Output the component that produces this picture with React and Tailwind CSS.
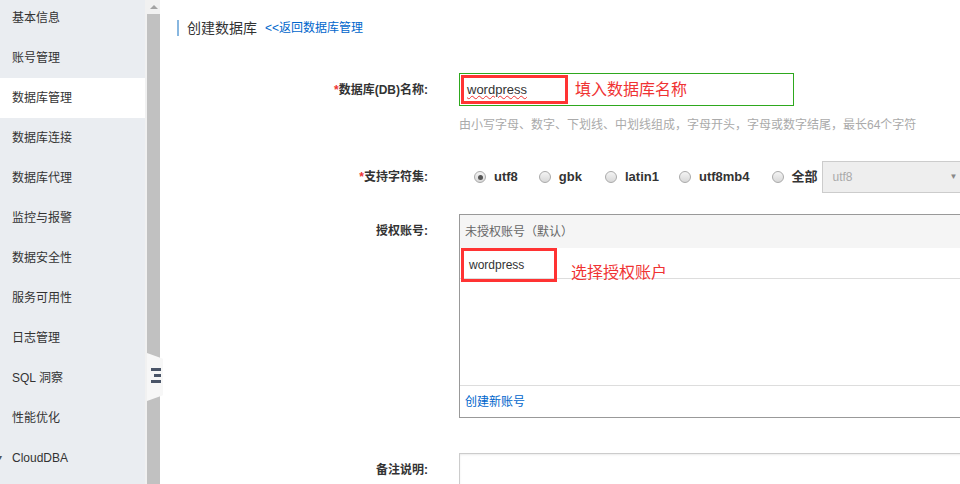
import React from "react";

const font = { fontFamily: '"Liberation Sans", "Noto Sans CJK SC", sans-serif' };

const menu = ["基本信息", "账号管理", "数据库管理", "数据库连接", "数据库代理", "监控与报警", "数据安全性", "服务可用性", "日志管理", "SQL 洞察", "性能优化", "CloudDBA"];

function Radio({ checked, label }) {
  return (
    <div className="flex items-center shrink-0 whitespace-nowrap">
      <span className="w-[12px] h-[12px] rounded-full border border-[#aaa] bg-gradient-to-b from-[#f4f4f4] to-[#d8d8d8] flex items-center justify-center">
        {checked && <span className="w-[5px] h-[5px] rounded-full bg-[#555]" />}
      </span>
      <span className="ml-[8px] text-[13px] font-bold text-[#333]">{label}</span>
    </div>
  );
}

export default function App() {
  return (
    <div className="w-[960px] h-[484px] overflow-hidden flex bg-white relative" style={font}>
      <div className="w-[145px] h-full bg-[#eaedf1] shrink-0">
        <div className="mt-[-2px]">
          {menu.map((m, i) => (
            <div key={m} className={`h-[40px] flex items-center pl-[12px] text-[12px] text-[#333] relative ${i === 2 ? "bg-white" : ""}`}>
              {m === "CloudDBA" && <span className="absolute left-[-2px] text-[8px] text-[#555]">▾</span>}
              {m}
            </div>
          ))}
        </div>
      </div>
      <div className="w-[2px] h-full bg-[#f1f1f1] shrink-0" />
      <div className="w-[13px] h-full shrink-0 flex flex-col">
        <div className="h-[14px] bg-[#f1f1f1] flex items-center justify-center">
          <span className="w-0 h-0 border-l-[4px] border-r-[4px] border-b-[4px] border-l-transparent border-r-transparent border-b-[#a3a3a3]" />
        </div>
        <div className="flex-1 bg-[#c1c1c1]" />
      </div>
      <div className="absolute left-[147px] top-[353px] w-[16px] h-[48px] bg-[#f7f7f7]" style={{ clipPath: "polygon(0 0, 100% 12%, 100% 88%, 0 100%)" }}>
        <div className="absolute left-[4px] top-[15px] w-[10px] flex flex-col gap-[3px]">
          <span className="h-[3px] bg-[#4a5568]" />
          <span className="h-[3px] bg-[#4a5568] ml-[3px] w-[7px]" />
          <span className="h-[3px] bg-[#4a5568]" />
        </div>
      </div>

      <div className="flex-1 relative min-w-0">
        <div className="flex items-center mt-[20px] ml-[17px] h-[16px]">
          <span className="w-[2px] h-[16px] bg-[#88b7e0]" />
          <span className="ml-[8px] text-[14px] text-[#333]">创建数据库</span>
          <span className="ml-[8px] text-[12px] text-[#0066cc]">&lt;&lt;返回数据库管理</span>
        </div>

        <div className="flex mt-[37px]">
          <div className="w-[268px] shrink-0 h-[33px] flex items-center justify-end text-[12px] font-bold text-[#333]">
            <span className="text-[#e33]">*</span>数据库(DB)名称:
          </div>
          <div className="ml-[31px]">
            <div className="w-[335px] h-[33px] border border-[#2ea81e] flex items-center pl-[1px]">
              <div className="w-[107px] h-[29px] border-[3px] border-[#f33] flex items-center pl-[3px] text-[13px] text-[#333] underline decoration-wavy decoration-[#e33] decoration-1">wordpress</div>
              <span className="ml-[7px] text-[16px] text-[#f03333]">填入数据库名称</span>
            </div>
            <div className="mt-[10px] text-[12px] text-[#aaa] whitespace-nowrap">由小写字母、数字、下划线、中划线组成，字母开头，字母或数字结尾，最长64个字符</div>
          </div>
        </div>

        <div className="flex mt-[27px] items-center">
          <div className="w-[268px] shrink-0 flex justify-end text-[12px] font-bold text-[#333]">
            <span className="text-[#e33]">*</span>支持字符集:
          </div>
          <div className="ml-[46px] flex items-center">
            <Radio checked label="utf8" />
            <div className="ml-[21px] shrink-0"><Radio label="gbk" /></div>
            <div className="ml-[23px] shrink-0"><Radio label="latin1" /></div>
            <div className="ml-[20px] shrink-0"><Radio label="utf8mb4" /></div>
            <div className="ml-[22px] shrink-0"><Radio label="全部" /></div>
            <div className="ml-[4px] shrink-0 w-[160px] h-[32px] bg-[#eee] border border-[#ccc] flex items-center px-[10px] text-[12px] text-[#aaa] relative">
              utf8
              <span className="absolute left-[127px] text-[8px] text-[#888]">▼</span>
            </div>
          </div>
        </div>

        <div className="flex mt-[21px]">
          <div className="w-[268px] shrink-0 h-[33px] flex items-center justify-end text-[12px] font-bold text-[#333]">授权账号:</div>
          <div className="ml-[31px] shrink-0 w-[520px] h-[204px] border border-[#999] flex flex-col">
            <div className="h-[33px] bg-[#f5f5f5] flex items-center pl-[5px] text-[12px] text-[#666]">未授权账号（默认）</div>
            <div className="h-[31px] border-b border-[#ddd] flex items-start">
              <div className="w-[96px] h-[34px] border-[3px] border-[#f33] flex items-center pl-[5px] text-[12px] text-[#333] ml-[1px] mt-0">wordpress</div>
              <span className="ml-[14px] mt-[13px] text-[16px] text-[#f03333]">选择授权账户</span>
            </div>
            <div className="flex-1" />
            <div className="h-[32px] border-t border-[#ddd] flex items-center pl-[5px] text-[12px] text-[#0066cc]">创建新账号</div>
          </div>
        </div>

        <div className="flex mt-[35px]">
          <div className="w-[268px] shrink-0 h-[33px] flex items-center justify-end text-[12px] font-bold text-[#333]">备注说明:</div>
          <div className="ml-[31px] shrink-0 w-[520px] h-[60px] border border-[#ccc] shadow-[inset_0_1px_2px_rgba(0,0,0,0.08)]" />
        </div>
      </div>
    </div>
  );
}
